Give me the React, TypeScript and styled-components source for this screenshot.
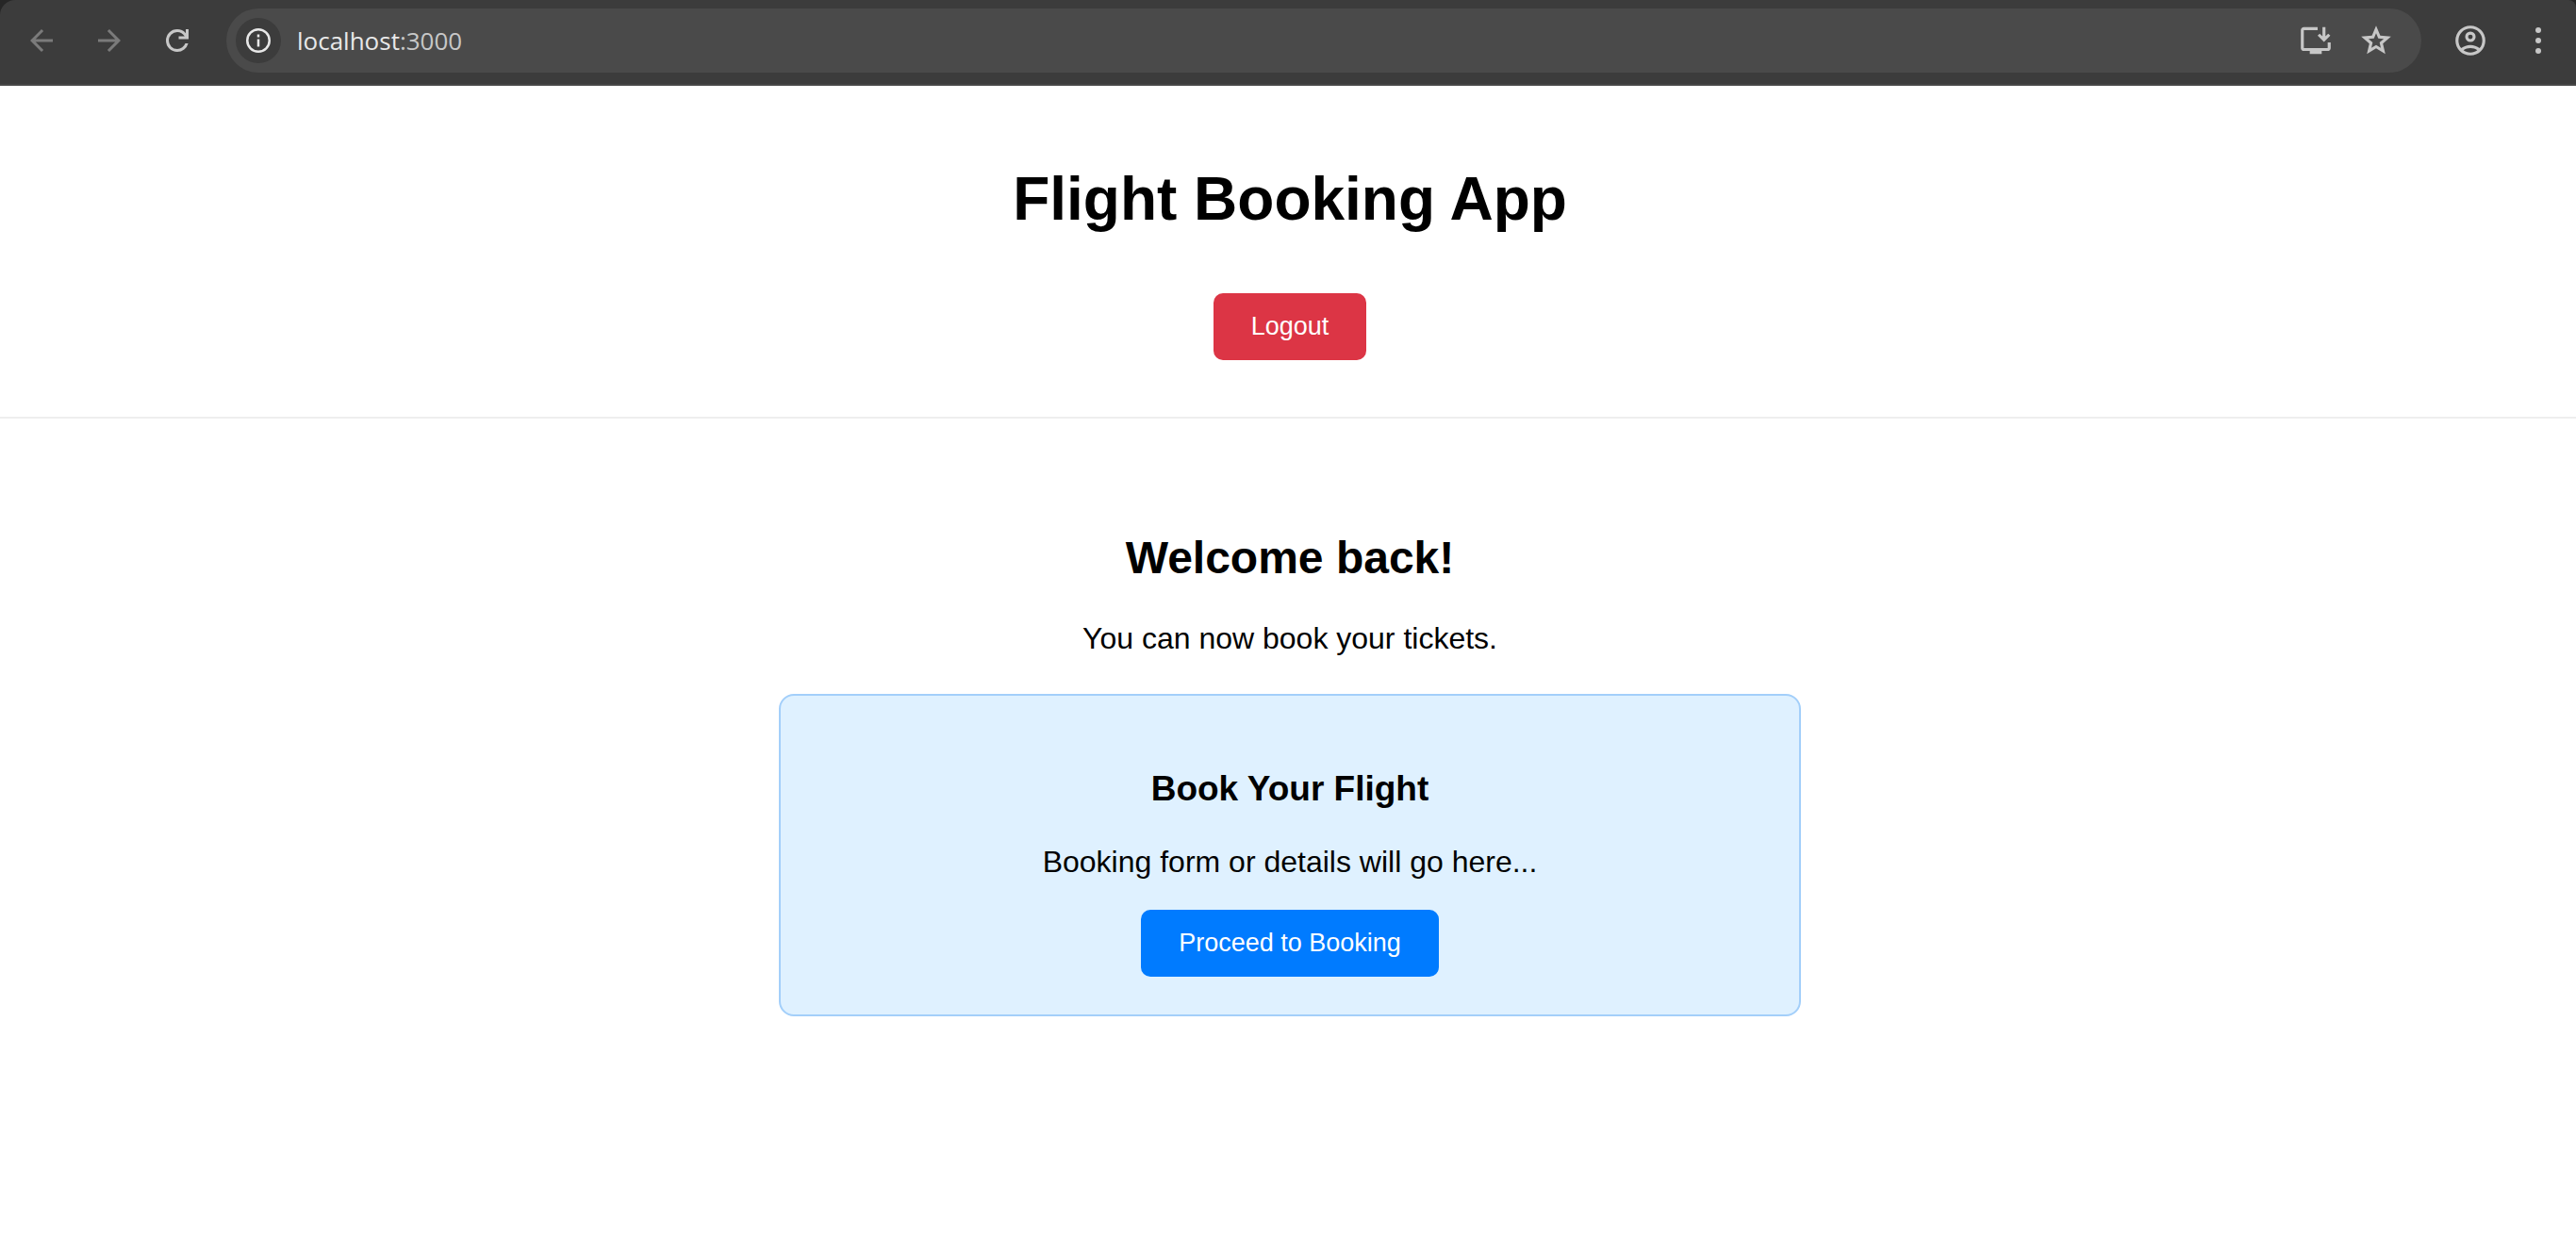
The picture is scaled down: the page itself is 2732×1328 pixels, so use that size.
import React from "react";
import styled, { createGlobalStyle } from "styled-components";

const Global = createGlobalStyle`
  * { box-sizing: border-box; }
  body { margin: 0; background: #fff; color: #000; font-family: "Liberation Sans", Arial, sans-serif; }
`;

const Frame = styled.div`
  background: #262626;
`;

const Toolbar = styled.header`
  display: flex;
  align-items: center;
  gap: 24px;
  padding: 9px 16px 12px 20px;
  background: #3c3c3c;
  border-bottom: 2px solid #474747;
  border-radius: 16px 8px 0 0;
`;

const IconButton = styled.button<{ $dim?: boolean; $fill?: string }>`
  display: flex;
  align-items: center;
  justify-content: center;
  flex: none;
  width: 48px;
  height: 48px;
  padding: 0;
  border: 0;
  border-radius: 50%;
  background: ${(p) => p.$fill ?? "transparent"};
  color: ${(p) => (p.$dim ? "#7b7b7b" : "#c7c7c7")};
`;

const AddressBar = styled.div`
  display: flex;
  flex: 1;
  align-items: center;
  gap: 16px;
  height: 68px;
  padding: 0 24px 0 10px;
  margin: 0 4px;
  border-radius: 34px;
  background: #4a4a4a;
`;

const SiteActions = styled.div`
  display: flex;
  gap: 16px;
`;

const Address = styled.div`
  flex: 1;
  padding-left: 1px;
  font: 26px/36px "Open Sans", "Noto Sans", sans-serif;
  color: #c7c7c7;
`;

const Host = styled.span`
  color: #e8e8e8;
`;

const Page = styled.div`
  text-align: center;
`;

const Banner = styled.div`
  padding: 83px 0 60px 4px;
  border-bottom: 2px solid #eee;
`;

const Title = styled.h1`
  margin: 0 0 63px;
  font-size: 64px;
  line-height: 74px;
`;

const Main = styled.main`
  padding: 120px 40px 40px 44px;
`;

const Heading = styled.h2`
  margin: 0 0 38px;
  font-size: 48px;
  line-height: 56px;
`;

const Subheading = styled.h3`
  margin: 0 0 36px;
  font-size: 37px;
  line-height: 44px;
`;

const Text = styled.p`
  margin: 0 0 32px;
  font-size: 32px;
  line-height: 38px;
`;

const Card = styled.section`
  max-width: 1084px;
  margin: 40px auto 0;
  padding: 77px 40px 40px;
  border: 2px solid #a3cffa;
  border-radius: 16px;
  background: #dff1ff;
`;

const Button = styled.button<{ $color: string }>`
  padding: 20px 40px;
  border: 0;
  border-radius: 10px;
  background: ${(p) => p.$color};
  color: #fff;
  font: 27px/31px "Liberation Sans", Arial, sans-serif;
  vertical-align: top;
`;

const icons = {
  back: "m313-440 224 224-57 56-320-320 320-320 57 56-224 224h487v80H313Z",
  forward: "M647-440H160v-80h487L423-744l57-56 320 320-320 320-57-56 224-224Z",
  reload:
    "M480-160q-134 0-227-93t-93-227q0-134 93-227t227-93q69 0 132 28.500T720-690v-110h80v280H520v-80h168q-32-56-87.500-88T480-720q-100 0-170 70t-70 170q0 100 70 170t170 70q77 0 139-44t87-116h84q-28 106-114 173t-196 67Z",
  install:
    "M320-120v-80H160q-33 0-56.500-23.500T80-280v-480q0-33 23.500-56.500T160-840h370v80H160v480h640v-150h80v150q0 33-23.500 56.500T800-200H640v80H320Zm380-320L530-610l56-56 74 74v-248h80v248l74-74 56 56-170 170Z",
  star:
    "m354-287 126-76 126 77-33-144 111-96-146-13-58-136-58 135-146 13 111 97-33 143ZM233-120l65-281L80-590l288-25 112-265 112 265 288 25-218 189 65 281-247-149-247 149Z",
  account:
    "M234-276q51-39 114-61.500T480-360q69 0 132 22.500T726-276q35-41 54.500-93T800-480q0-133-93.500-226.500T480-800q-133 0-226.500 93.500T160-480q0 59 19.500 111t54.500 93Zm246-164q-59 0-99.500-40.500T340-580q0-59 40.500-99.500T480-720q59 0 99.500 40.500T620-580q0 59-40.500 99.500T480-440Zm0 360q-83 0-156-31.500T197-197q-54-54-85.500-127T80-480q0-83 31.500-156T197-763q54-54 127-85.500T480-880q83 0 156 31.500T763-763q54 54 85.500 127T880-480q0 83-31.500 156T763-197q-54 54-127 85.500T480-80Zm0-80q53 0 100-15.500t86-44.500q-39-29-86-44.500T480-280q-53 0-100 15.500T294-220q39 29 86 44.500T480-160Zm0-360q26 0 43-17t17-43q0-26-17-43t-43-17q-26 0-43 17t-17 43q0 26 17 43t43 17Z",
};

function Icon({ name, size = 36 }: { name: keyof typeof icons; size?: number }) {
  return (
    <svg width={size} height={size} viewBox="0 -960 960 960" fill="currentColor" aria-hidden="true">
      <path d={icons[name]} />
    </svg>
  );
}

export default function App() {
  return (
    <>
      <Global />
      <Frame>
        <Toolbar>
          <IconButton $dim aria-label="Back"><Icon name="back" /></IconButton>
          <IconButton $dim aria-label="Forward"><Icon name="forward" /></IconButton>
          <IconButton aria-label="Reload"><Icon name="reload" /></IconButton>
          <AddressBar>
            <IconButton $fill="#3c3c3c" aria-label="Site information">
              <svg width="32" height="32" viewBox="0 0 32 32" fill="none" stroke="#e8e8e8" strokeWidth="2.500" aria-hidden="true">
                <circle cx="16" cy="16" r="11.750" />
                <path d="M16 14.500v8M16 9.500v3" />
              </svg>
            </IconButton>
            <Address><Host>localhost</Host>:3000</Address>
            <SiteActions>
              <IconButton aria-label="Install app"><Icon name="install" size={38} /></IconButton>
              <IconButton aria-label="Bookmark"><Icon name="star" size={38} /></IconButton>
            </SiteActions>
          </AddressBar>
          <IconButton aria-label="Profile"><Icon name="account" size={38} /></IconButton>
          <IconButton aria-label="Menu">
            <svg width="36" height="36" viewBox="0 0 36 36" fill="currentColor" aria-hidden="true">
              <circle cx="18" cy="7" r="3" /><circle cx="18" cy="18" r="3" /><circle cx="18" cy="29" r="3" />
            </svg>
          </IconButton>
        </Toolbar>
      </Frame>
      <Page>
        <Banner>
          <Title>Flight Booking App</Title>
          <Button $color="#dc3545">Logout</Button>
        </Banner>
        <Main>
          <Heading>Welcome back!</Heading>
          <Text>You can now book your tickets.</Text>
          <Card>
            <Subheading>Book Your Flight</Subheading>
            <Text>Booking form or details will go here...</Text>
            <Button $color="#007bff">Proceed to Booking</Button>
          </Card>
        </Main>
      </Page>
    </>
  );
}
